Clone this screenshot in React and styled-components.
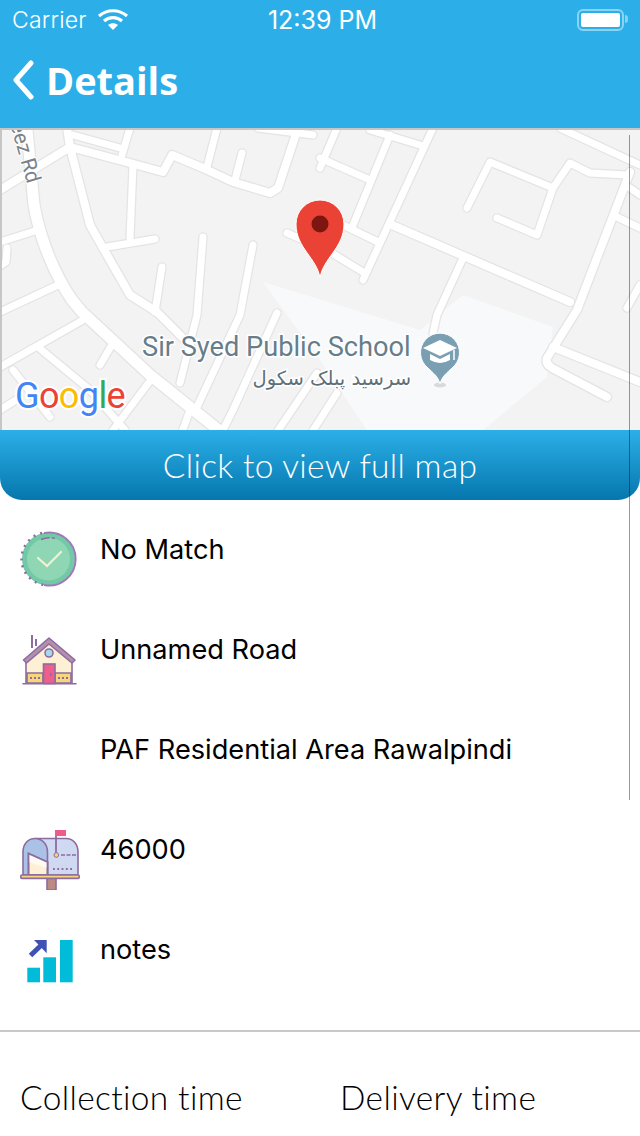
import React from 'react';
import styled, { createGlobalStyle } from 'styled-components';

const GlobalStyle = createGlobalStyle`
   html, body {
      margin: 0;
      padding: 0;
      background: #fff;
   }
   body {
      width: 640px;
      height: 1136px;
      overflow: hidden;
   }
`;

const roads = [
   // main roads
   { w: 11, d: 'M27 130 C30 160 32 185 34 205 C40 240 55 275 72 300 L82 312 L150 375 L226 436' },
   { w: 8, d: 'M0 190 L70 147 L130 163 L163 172 L172 155 L203 168 L233 182 L270 193 L278 188 L295 137' },
   { w: 8, d: 'M67 128 L70 147 L90 225 L103 248 L130 295 L157 312 L190 345' },
   { w: 8, d: 'M392 225 L570 302' },
   { w: 8, d: 'M630 172 L577 310 L547 358 Q545 364 552 368 L607 397' },
   { w: 8, d: 'M553 347 L640 382' },
   // side streets
   { w: 7, d: 'M133 165 L130 238' },
   { w: 7, d: 'M107 247 L155 239' },
   { w: 7, d: 'M73 135 L120 148' },
   { w: 7, d: 'M130 128 L122 155' },
   { w: 7, d: 'M217 128 L207 167' },
   { w: 7, d: 'M242 153 L235 180' },
   { w: 7, d: 'M258 128 L313 135' },
   { w: 7, d: 'M203 237 L197 315 L180 383' },
   { w: 7, d: 'M253 245 L240 315 L197 407' },
   { w: 7, d: 'M162 267 L155 312' },
   { w: 7, d: 'M0 242 L38 230' },
   { w: 7, d: 'M0 312 L58 285' },
   { w: 7, d: 'M7 248 L6 262 L0 266' },
   { w: 7, d: 'M320 158 L370 180' },
   { w: 7, d: 'M337 128 L320 168' },
   { w: 7, d: 'M390 135 L353 225' },
   { w: 7, d: 'M370 130 L420 145' },
   { w: 7, d: 'M433 128 L363 280' },
   { w: 7, d: 'M343 225 L378 242' },
   { w: 7, d: 'M287 233 L330 252 L363 272' },
   { w: 7, d: 'M463 258 L437 315 L433 333' },
   { w: 7, d: 'M467 208 L490 162 L553 188 L570 163 L590 173 L627 175' },
   { w: 7, d: 'M553 188 L537 235 L497 218' },
   { w: 7, d: 'M560 128 L640 165' },
   { w: 7, d: 'M617 217 L640 228' },
   { w: 7, d: 'M630 188 L640 195' },
   { w: 7, d: 'M627 308 L640 285' },
   { w: 7, d: 'M337 393 L312 432' },
   { w: 7, d: 'M0 367 L83 320' },
   { w: 7, d: 'M38 347 L90 390 L125 430' },
   { w: 7, d: 'M13 370 L50 417' },
   { w: 7, d: 'M113 343 L100 365' },
   { w: 7, d: 'M153 377 L113 430' },
   { w: 7, d: 'M190 410 L182 432' },
   { w: 7, d: 'M277 313 L233 410 L222 432' },
   { w: 7, d: 'M317 373 L277 432' },
   { w: 7, d: 'M0 410 L16 400' },
];

const MapDrawing = () => (
   <MapSvg viewBox="0 130 640 300">
      <polygon points="263,282 420,330 463,295 553,327 547,377 483,430 367,430 320,360" fill="#f8f9fa" />
      <g fill="none" stroke="#e4e4e4" strokeLinecap="round" strokeLinejoin="round">
         {roads.map((r, i) => <path key={i} d={r.d} strokeWidth={r.w + 2.5} />)}
      </g>
      <g fill="none" stroke="#ffffff" strokeLinecap="round" strokeLinejoin="round">
         {roads.map((r, i) => <path key={i} d={r.d} strokeWidth={r.w} />)}
      </g>

      <StreetLabel transform="translate(10 124) rotate(74)">eez Rd</StreetLabel>
      <PlaceLabel x="142" y="356">Sir Syed Public School</PlaceLabel>
      <UrduLabel x="411" y="385" direction="rtl">سرسید پبلک سکول</UrduLabel>

      {/* school marker */}
      <ellipse cx="440" cy="385" rx="6" ry="2.5" fill="#c9ced2" opacity="0.7" />
      <path d="M440 384 C438 376 433 373 428 368 A19.5 19.5 0 1 1 452 368 C447 373 442 376 440 384Z" fill="#7a9fb3" stroke="#fff" strokeWidth="1" />
      <path d="M440 340 L457 348 L440 356 L423 348Z" fill="#fff" />
      <path d="M430 354 L440 359 L450 354 L450 360 Q440 366 430 360Z" fill="#fff" />
      <path d="M454 350 L454 360" stroke="#fff" strokeWidth="1.5" />

      {/* red pin */}
      <path d="M320 278 C317 258 296 248 296 224 A24 24 0 1 1 344 224 C344 248 323 258 320 278Z" fill="#ea4335" stroke="#fff" strokeWidth="1" />
      <circle cx="320" cy="224" r="8.5" fill="#7d1510" />

      <GoogleLabel x="15" y="408">
         <tspan fill="#4285f4">G</tspan>
         <tspan fill="#ea4335">o</tspan>
         <tspan fill="#fbbc05">o</tspan>
         <tspan fill="#4285f4">g</tspan>
         <tspan fill="#34a853">l</tspan>
         <tspan fill="#ea4335">e</tspan>
      </GoogleLabel>
   </MapSvg>
);

const WifiIcon = () => (
   <svg width="32" height="22" viewBox="0 0 32 22" fill="none" stroke="#fff" strokeWidth="3.2">
      <path d="M2 7 C10 0 22 0 30 7" />
      <path d="M7 12 C12 7.5 20 7.5 25 12" />
      <path d="M16 21 L11 16 C14 13.5 18 13.5 21 16Z" fill="#fff" stroke="none" />
   </svg>
);

const CheckIcon = () => (
   <svg width="60" height="60" viewBox="0 0 60 60">
      <circle cx="28.5" cy="29" r="26.5" fill="#72c9a6" />
      <circle cx="28.5" cy="29" r="21.5" fill="#8fd6b5" />
      <path d="M24 3 A26.5 26.5 0 1 1 24 55" fill="none" stroke="#a079b8" strokeWidth="2" />
      <path d="M22 3 A26.5 26.5 0 0 0 24 55" fill="none" stroke="#8d6c9f" strokeWidth="2.5" strokeDasharray="2 5" />
      <path d="M21 9.5 Q28 6.5 35 8.5" fill="none" stroke="#8d6c9f" strokeWidth="1.5" strokeDasharray="9 2 3 9" />
      <path d="M18 28 L27 36 L41 22" fill="none" stroke="#f5f0d0" strokeWidth="2.2" strokeLinecap="round" />
   </svg>
);

const HouseIcon = () => (
   <svg width="60" height="60" viewBox="0 0 60 60" stroke="#8d6c9f" strokeWidth="1.6">
      <path d="M12 5 V18 M16 9 V16" fill="none" strokeWidth="2" />
      <path d="M7 30 L29 12 L51 30 V53.5 H7Z" fill="#fdf0d5" stroke="none" />
      <path d="M6 31 V53.5 M52 31 V53.5" fill="none" />
      <path d="M7 43 H23 V53 H7Z M35 43 H51 V53 H35Z" fill="#f7d57a" />
      <path d="M10 48 H20 M38 48 H48" stroke="#8d6c9f" strokeWidth="2.2" strokeDasharray="2 2" />
      <path d="M3.5 30 L29 8 L55 30 L52 33 L29 14 L6.5 33Z" fill="#b58fae" strokeLinejoin="round" />
      <circle cx="29" cy="23" r="4" fill="#a9d8ee" />
      <rect x="23.5" y="34" width="11.5" height="19.5" fill="#ee5f8d" />
      <rect x="30" y="43" width="1.6" height="3" fill="#8d6c9f" stroke="none" />
      <path d="M3 53.7 H56" fill="none" strokeLinecap="round" />
   </svg>
);

const MailboxIcon = () => (
   <svg width="60" height="60" viewBox="0 0 60 60" stroke="#8d6c9f" strokeWidth="1.6">
      <rect x="27" y="48" width="9" height="12" fill="#bb8a85" />
      <path d="M16 8.5 H46 C53 8.5 58 14 58 22 V45 H16Z" fill="#cfd9f2" />
      <path d="M3 45 V22 C3 14 8 8.5 15 8.5 C22 8.5 27.5 14 27.5 22 V45Z" fill="#a9c2e6" />
      <path d="M8.5 23.5 L27.5 32 V45 H8.5Z" fill="#fdf0d5" />
      <path d="M8.5 23.5 L27.5 32 V38 L8.5 32Z" fill="#fff" stroke="none" opacity="0.7" />
      <path d="M8.5 23.5 L27.5 32 V45 H8.5Z" fill="none" />
      <path d="M36 25 V1" fill="none" strokeWidth="1.8" />
      <path d="M35 0 H46 V6 H35Z" fill="#ef5c87" stroke="none" />
      <circle cx="36.3" cy="25" r="2.3" fill="#f7d57a" strokeWidth="1" />
      <path d="M41 25 H57" fill="none" strokeDasharray="4 1.5" />
      <path d="M33 39 H52" fill="none" strokeWidth="2.2" strokeDasharray="1.8 2.5" />
      <rect x="0.8" y="45" width="58.4" height="3.4" fill="#f7d57a" rx="1" />
   </svg>
);

const BarsIcon = () => (
   <svg width="60" height="60" viewBox="0 0 60 60">
      <rect x="7.3" y="37.7" width="12.7" height="14.6" fill="#00bcd9" />
      <rect x="23.3" y="27.3" width="12.7" height="25" fill="#00bcd9" />
      <rect x="40" y="10" width="12.7" height="42.3" fill="#00bcd9" />
      <path d="M10.5 25.5 L23 13.5" stroke="#3f51b5" strokeWidth="5" />
      <polygon points="14,10 26.7,10 26.7,23.3" fill="#3f51b5" />
   </svg>
);

const rows = [
   { icon: <CheckIcon />, text: 'No Match' },
   { icon: <HouseIcon />, text: 'Unnamed Road' },
   { icon: null, text: 'PAF Residential Area Rawalpindi' },
   { icon: <MailboxIcon />, text: '46000' },
   { icon: <BarsIcon />, text: 'notes' },
];

const App = () => (
   <>
      <GlobalStyle />
      <Page>
         <Header>
            <StatusBar>
               <StatusLeft>
                  <Carrier>Carrier</Carrier>
                  <WifiIcon />
               </StatusLeft>
               <Clock>12:39 PM</Clock>
               <Battery>
                  <BatteryFill />
               </Battery>
            </StatusBar>
            <NavBar>
               <svg width="24" height="40" viewBox="0 0 24 40" fill="none" stroke="#fff" strokeWidth="5" strokeLinecap="round" strokeLinejoin="round">
                  <path d="M19 3 L4 20 L19 37" />
               </svg>
               <Title>Details</Title>
            </NavBar>
         </Header>

         <MapFrame>
            <MapDrawing />
         </MapFrame>
         <MapButton>Click to view full map</MapButton>

         {rows.map(row => (
            <Row key={row.text}>
               <IconSlot>{row.icon}</IconSlot>
               <RowText>{row.text}</RowText>
            </Row>
         ))}

         <Divider />
         <Times>
            <TimeLabel>Collection time</TimeLabel>
            <TimeLabel>Delivery time</TimeLabel>
         </Times>

         <ScrollLine />
      </Page>
   </>
);

export default App;

const Page = styled.div`
   position: relative;
   width: 640px;
   height: 1136px;
   overflow: hidden;
   background: #fff;
`;

const Header = styled.header`
   background: #2cafe8;
   color: #fff;
   height: 128px;
`;

const StatusBar = styled.div`
   height: 40px;
   padding: 0 16px 0 12px;
   display: grid;
   grid-template-columns: 1fr auto 1fr;
   align-items: center;
   font-family: Inter, "Liberation Sans", sans-serif;
`;

const StatusLeft = styled.div`
   display: flex;
   align-items: center;
   gap: 10px;
`;

const Carrier = styled.span`
   font-size: 23px;
   font-weight: 300;
   letter-spacing: 0.2px;
`;

const Clock = styled.span`
   margin-left: 9px;
   font-size: 25px;
   font-weight: 400;
`;

const Battery = styled.div`
   position: relative;
   justify-self: end;
   box-sizing: border-box;
   width: 47px;
   height: 22px;
   padding: 2px;
   border: 2px solid rgba(255, 255, 255, 0.45);
   border-radius: 6px;
   &::after {
      content: '';
      position: absolute;
      right: -6px;
      top: 4px;
      width: 3px;
      height: 8px;
      border-radius: 0 3px 3px 0;
      background: rgba(255, 255, 255, 0.45);
   }
`;

const BatteryFill = styled.div`
   height: 100%;
   background: #fff;
   border-radius: 2px;
`;

const NavBar = styled.div`
   height: 88px;
   padding: 0 0 9px 12px;
   box-sizing: border-box;
   display: flex;
   align-items: center;
   gap: 10px;
`;

const Title = styled.h1`
   margin: 0;
   font-family: "Open Sans", sans-serif;
   font-size: 38px;
   font-weight: 700;
   line-height: 44px;
`;

const MapFrame = styled.div`
   box-sizing: border-box;
   height: 302px;
   border-top: 2px solid #c6c6c6;
   border-left: 2px solid #c6c6c6;
   background: #f3f3f3;
   overflow: hidden;
`;

const MapSvg = styled.svg`
   display: block;
   width: 640px;
   height: 300px;
   margin-left: -2px;
`;

const StreetLabel = styled.text`
   font-family: Roboto, sans-serif;
   font-size: 21px;
   fill: #7b8288;
   stroke: #fff;
   stroke-width: 2px;
   paint-order: stroke;
`;

const PlaceLabel = styled.text`
   font-family: Roboto, sans-serif;
   font-size: 27.2px;
   fill: #677d8a;
   stroke: #fff;
   stroke-width: 3px;
   paint-order: stroke;
`;

const UrduLabel = styled.text`
   font-family: "DejaVu Sans", sans-serif;
   font-size: 19.5px;
   fill: #5f6f78;
   stroke: #fff;
   stroke-width: 3px;
   paint-order: stroke;
`;

const GoogleLabel = styled.text`
   font-family: Roboto, sans-serif;
   font-size: 36px;
   font-weight: 400;
   letter-spacing: -0.6px;
   stroke: #fff;
   stroke-width: 4px;
   paint-order: stroke;
`;

const MapButton = styled.div`
   height: 70px;
   display: flex;
   align-items: center;
   justify-content: center;
   background: linear-gradient(180deg, #2cafe8 0%, #0577ad 100%);
   border-radius: 0 0 22px 22px;
   color: #fff;
   font-family: Lato, sans-serif;
   font-size: 33.5px;
   font-weight: 300;
   letter-spacing: 0.3px;
`;

const Row = styled.div`
   box-sizing: border-box;
   height: 100px;
   padding: 30px 0 0 20px;
   display: flex;
   align-items: flex-start;
`;

const IconSlot = styled.div`
   flex: 0 0 60px;
   height: 60px;
   margin-right: 20px;
   svg {
      display: block;
   }
`;

const RowText = styled.span`
   font-family: Inter, "Liberation Sans", sans-serif;
   font-size: 27.2px;
   line-height: 40px;
   color: #000;
`;

const Divider = styled.div`
   height: 2px;
   margin-top: 30px;
   background: #c8c8c8;
`;

const Times = styled.div`
   display: grid;
   grid-template-columns: 320px 1fr;
   padding: 45px 0 0 20px;
`;

const TimeLabel = styled.span`
   font-family: Lato, sans-serif;
   font-size: 33.5px;
   font-weight: 300;
   letter-spacing: 0.35px;
   line-height: 40px;
   color: #000;
`;

const ScrollLine = styled.div`
   position: absolute;
   left: 629px;
   top: 135px;
   width: 1px;
   height: 665px;
   background: rgba(0, 0, 0, 0.4);
`;
